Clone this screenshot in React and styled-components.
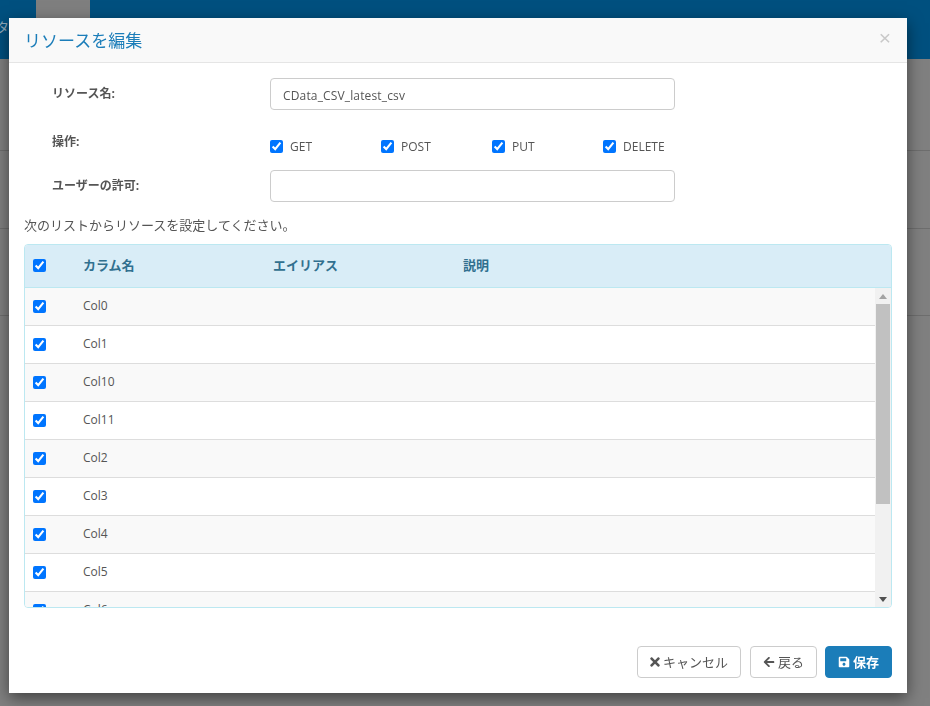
import React from 'react';
import styled, { createGlobalStyle } from 'styled-components';
import { FaTimes, FaArrowLeft, FaSave } from 'react-icons/fa';

const GlobalStyle = createGlobalStyle`
  html, body {
    margin: 0;
    padding: 0;
    height: 100%;
    overflow: hidden;
    background: #808080;
    font-family: "Open Sans", "Noto Sans CJK JP", sans-serif;
    font-size: 12px;
    color: #555;
  }
`;

const Page = styled.div`
  height: 706px;
  background: #808080;
`;

const TopBar = styled.div`
  height: 59px;
  background: #00507f;
  display: flex;
  align-items: flex-start;
  padding-left: 36px;
`;

const TopTab = styled.div`
  width: 54px;
  height: 59px;
  background: #7f7f7f;
`;

const BackLabel = styled.span`
  position: absolute;
  left: -4px;
  top: 17px;
  font-size: 13px;
  color: #8fa9bb;
`;

const BackRow = styled.div`
  height: ${props => props.$height}px;
  border-bottom: 1px solid #6e6e6e;
`;

const Modal = styled.div`
  position: fixed;
  left: 9px;
  top: 18px;
  width: 898px;
  height: 675px;
  background: #fff;
  box-shadow: 0 5px 15px rgba(0, 0, 0, 0.5);
  display: flex;
  flex-direction: column;
`;

const Header = styled.div`
  height: 44px;
  flex-shrink: 0;
  background: #f9f9f9;
  border-bottom: 1px solid #e5e5e5;
  display: flex;
  align-items: center;
  justify-content: space-between;
  padding: 0 16px 0 15px;
`;

const Title = styled.h4`
  margin: 0;
  padding-bottom: 2px;
  font-size: 17px;
  font-weight: 400;
  color: #1b7db9;
`;

const CloseButton = styled.button`
  border: none;
  background: none;
  padding: 0;
  margin-top: -6px;
  font-family: "Liberation Sans", sans-serif;
  font-size: 21px;
  line-height: 1;
  color: #c9c9c9;
`;

const Body = styled.div`
  flex: 1;
  padding: 15px 15px 0;
`;

const FormRow = styled.div`
  display: grid;
  grid-template-columns: 246px 405px;
  height: ${props => props.$height}px;
`;

const Label = styled.label`
  padding: ${props => props.$top}px 0 0 28px;
  font-size: 12px;
  font-weight: 700;
  color: #555;
`;

const TextInput = styled.input`
  box-sizing: border-box;
  width: 405px;
  height: 32px;
  padding: 2px 12px 0;
  border: 1px solid #ccc;
  border-radius: 4px;
  font: inherit;
  letter-spacing: 0.15px;
  color: #555;
  outline: none;
`;

const Methods = styled.div`
  display: grid;
  grid-template-columns: repeat(4, 111px);
  padding-top: 10px;
`;

const Method = styled.label`
  display: flex;
  align-items: center;
  gap: 7px;
  height: 20px;
  color: #555;
`;

const Check = styled.input.attrs({ type: 'checkbox', readOnly: true })`
  width: 13px;
  height: 13px;
  margin: 0;
  flex-shrink: 0;
`;

const Hint = styled.p`
  margin: 0;
  height: 29px;
  font-size: 13px;
  line-height: 20px;
  color: #555;
`;

const Panel = styled.div`
  width: 868px;
  height: 364px;
  box-sizing: border-box;
  border: 1px solid #bce8f1;
  border-radius: 4px;
  overflow: hidden;
  display: flex;
  flex-direction: column;
`;

const PanelHead = styled.div`
  height: 42px;
  box-sizing: content-box;
  flex-shrink: 0;
  background: #d9edf7;
  border-bottom: 1px solid #bce8f1;
  display: grid;
  grid-template-columns: 50px 190px 190px 1fr;
  align-items: center;
  padding-left: 8px;
  font-size: 13px;
  font-weight: 700;
  color: #31708f;
`;

const HeadCheck = styled.span`
  display: flex;
  padding-bottom: 2px;
`;

const HeadCell = styled.span`
  padding-bottom: 4px;
`;

const PanelBody = styled.div`
  flex: 1;
  min-height: 0;
  display: flex;
`;

const List = styled.div`
  flex: 1;
  overflow: hidden;
`;

const Row = styled.div`
  height: 37px;
  border-bottom: 1px solid #ddd;
  background: ${props => (props.$odd ? '#f9f9f9' : '#fff')};
  display: grid;
  grid-template-columns: 50px 1fr;
  align-items: center;
  padding-left: 8px;
  color: #555;
`;

const RowText = styled.span`
  padding-bottom: 2px;
`;

const Scrollbar = styled.div`
  width: 16px;
  flex-shrink: 0;
  background: #f1f1f1;
  display: flex;
  flex-direction: column;
  align-items: center;
`;

const Arrow = styled.div`
  height: 16px;
  width: 16px;
  flex-shrink: 0;
  display: flex;
  align-items: center;
  justify-content: center;
`;

const Thumb = styled.div`
  width: 14px;
  height: 200px;
  background: #c1c1c1;
`;

const Track = styled.div`
  flex: 1;
`;

const Footer = styled.div`
  flex-shrink: 0;
  height: 47px;
  padding: 0 15px;
  display: flex;
  justify-content: flex-end;
  align-items: flex-start;
  gap: 8px;
`;

const Button = styled.button`
  height: 32px;
  box-sizing: border-box;
  padding: 0 12px;
  display: flex;
  align-items: center;
  gap: 3px;
  border: 1px solid ${props => (props.$primary ? '#1b7db9' : '#ccc')};
  border-radius: 4px;
  background: ${props => (props.$primary ? '#1b7db9' : '#fff')};
  color: ${props => (props.$primary ? '#fff' : '#555')};
  font-family: inherit;
  font-size: 13px;
  font-weight: ${props => (props.$primary ? 700 : 400)};

  &:first-child {
    margin-right: 1px;
  }
`;

const ButtonText = styled.span`
  padding-bottom: 2px;
`;

// the glyph only fills part of its square box, so the box is pulled in
const CancelIcon = styled(FaTimes)`
  margin: 0 -2px;
`;

const columns = ['Col0', 'Col1', 'Col10', 'Col11', 'Col2', 'Col3', 'Col4', 'Col5', 'Col6'];
const methods = ['GET', 'POST', 'PUT', 'DELETE'];

export default function App() {
  return (
    <>
      <GlobalStyle />
      <Page>
        <TopBar>
          <BackLabel>タ</BackLabel>
          <TopTab />
        </TopBar>
        <BackRow $height={91} />
        <BackRow $height={77} />
        <BackRow $height={86} />
      </Page>
      <Modal>
        <Header>
          <Title>リソースを編集</Title>
          <CloseButton>×</CloseButton>
        </Header>
        <Body>
          <FormRow $height={48}>
            <Label $top={6}>リソース名:</Label>
            <TextInput defaultValue="CData_CSV_latest_csv" />
          </FormRow>
          <FormRow $height={44}>
            <Label $top={6}>操作:</Label>
            <Methods>
              {methods.map(m => (
                <Method key={m}>
                  <Check checked />
                  {m}
                </Method>
              ))}
            </Methods>
          </FormRow>
          <FormRow $height={45}>
            <Label $top={6}>ユーザーの許可:</Label>
            <TextInput />
          </FormRow>
          <Hint>次のリストからリソースを設定してください。</Hint>
          <Panel>
            <PanelHead>
              <HeadCheck><Check checked /></HeadCheck>
              <HeadCell>カラム名</HeadCell>
              <HeadCell>エイリアス</HeadCell>
              <HeadCell>説明</HeadCell>
            </PanelHead>
            <PanelBody>
              <List>
                {columns.map((c, i) => (
                  <Row key={c} $odd={i % 2 === 0}>
                    <Check checked />
                    <RowText>{c}</RowText>
                  </Row>
                ))}
              </List>
              <Scrollbar>
                <Arrow>
                  <svg width="8" height="5" viewBox="0 0 8 5"><path d="M4 0 8 5H0z" fill="#a3a3a3" /></svg>
                </Arrow>
                <Thumb />
                <Track />
                <Arrow>
                  <svg width="8" height="5" viewBox="0 0 8 5"><path d="M0 0H8L4 5z" fill="#505050" /></svg>
                </Arrow>
              </Scrollbar>
            </PanelBody>
          </Panel>
        </Body>
        <Footer>
          <Button><CancelIcon size={14} /><ButtonText>キャンセル</ButtonText></Button>
          <Button><FaArrowLeft size={12} /><ButtonText>戻る</ButtonText></Button>
          <Button $primary><FaSave size={12} /><ButtonText>保存</ButtonText></Button>
        </Footer>
      </Modal>
    </>
  );
}
